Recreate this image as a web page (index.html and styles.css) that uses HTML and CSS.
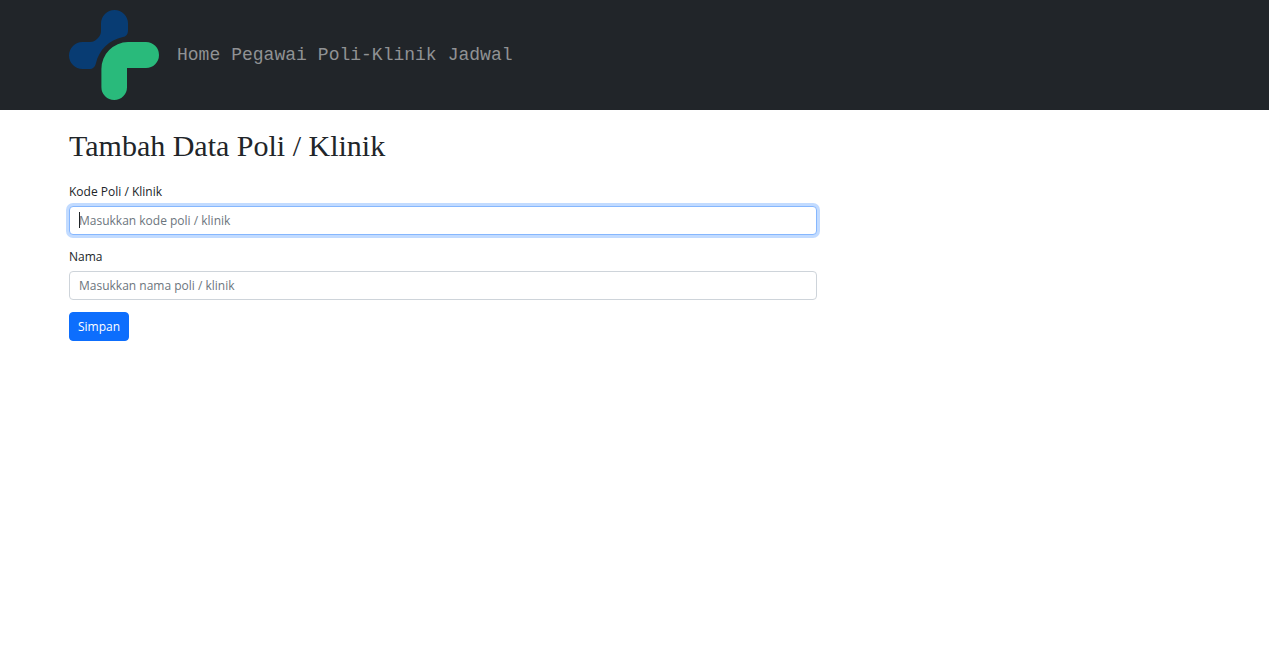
FILE: index.html
```html
<!DOCTYPE html>
<html lang="id">
<head>
  <meta charset="utf-8">
  <meta name="viewport" content="width=device-width, initial-scale=1">
  <title>Tambah Data Poli / Klinik</title>
  <link rel="stylesheet" href="styles.css">
</head>
<body>
  <header class="navbar">
    <div class="container navbar-inner">
      <a class="brand" href="#" aria-label="Beranda">
        <svg class="logo" viewBox="0 0 90 90" aria-hidden="true">
          <path fill="#083c73" d="M32 13.500A13.500 13.500 0 0 1 59 13.500V20C59 24 57.500 26.500 54 27C40 30 30 40 27 53C26 57 24 59 20 59H13.500A13.500 13.500 0 0 1 13.500 32H21C24 32 26 31 28 29C31 26 32 24 32 21Z"/>
          <path fill="#29ba7b" d="M59 32H77A13 13 0 0 1 77 58H58V77.200A12.800 12.800 0 0 1 32.400 77.200V59A27 27 0 0 1 59 32Z"/>
        </svg>
      </a>
      <nav class="nav">
        <a class="nav-link" href="#">Home</a>
        <a class="nav-link" href="#">Pegawai</a>
        <a class="nav-link" href="#">Poli-Klinik</a>
        <a class="nav-link" href="#">Jadwal</a>
      </nav>
    </div>
  </header>
  <main class="container">
    <h1 class="title">Tambah Data Poli / Klinik</h1>
    <form class="form">
      <div class="field">
        <label class="label" for="kode">Kode Poli / Klinik</label>
        <div class="control">
          <input class="input input-active" id="kode" type="text" placeholder="Masukkan kode poli / klinik">
          <span class="caret"></span>
        </div>
      </div>
      <div class="field">
        <label class="label" for="nama">Nama</label>
        <input class="input" id="nama" type="text" placeholder="Masukkan nama poli / klinik">
      </div>
      <button class="button" type="submit">Simpan</button>
    </form>
  </main>
</body>
</html>
```

FILE: styles.css
```css
* {
  box-sizing: border-box;
}

body {
  margin: 0;
  background: #fff;
  color: #212529;
  font: 12px/18px "Open Sans", "Noto Sans", sans-serif;
}

.container {
  max-width: 1155px;
  margin: 0 auto;
  padding: 0 12px;
}

.navbar {
  padding: 10px 0;
  background: #212529;
}

.navbar-inner {
  display: flex;
  align-items: center;
  gap: 18px;
}

.brand,
.logo {
  display: block;
}

.logo {
  width: 90px;
  height: 90px;
}

.nav {
  display: flex;
  flex-wrap: wrap;
  gap: 11px;
}

.nav-link {
  color: #909294;
  font: 18px/24px "Courier New", "Liberation Mono", monospace;
  text-decoration: none;
}

.title {
  margin: 18px 0;
  font: 400 30px/36px "Liberation Serif", serif;
}

.form {
  display: flex;
  flex-direction: column;
  align-items: flex-start;
  gap: 12px;
  width: calc(200% / 3);
  padding-right: 6px;
}

.field {
  display: flex;
  flex-direction: column;
  gap: 4px;
  width: 100%;
}

.label {
  line-height: 20px;
}

.control {
  position: relative;
}

.input {
  display: block;
  width: 100%;
  height: 29px;
  padding: 4px 9px;
  border: 1px solid #ced4da;
  border-radius: 4px;
  background: #fff;
  color: #212529;
  font: inherit;
  outline: 0;
}

.input::placeholder {
  color: #6c757d;
  opacity: 1;
}

.input:focus,
.input-active {
  border-color: #86b7fe;
  box-shadow: 0 0 0 3px #c2dbff;
}

.caret {
  position: absolute;
  top: 6px;
  left: 10px;
  width: 1px;
  height: 16px;
  background: #212529;
}

.input:focus + .caret {
  display: none;
}

.button {
  height: 29px;
  padding: 4px 8px;
  border: 1px solid #0d6efd;
  border-radius: 4px;
  background: #0d6efd;
  color: #fff;
  font: inherit;
}
```
